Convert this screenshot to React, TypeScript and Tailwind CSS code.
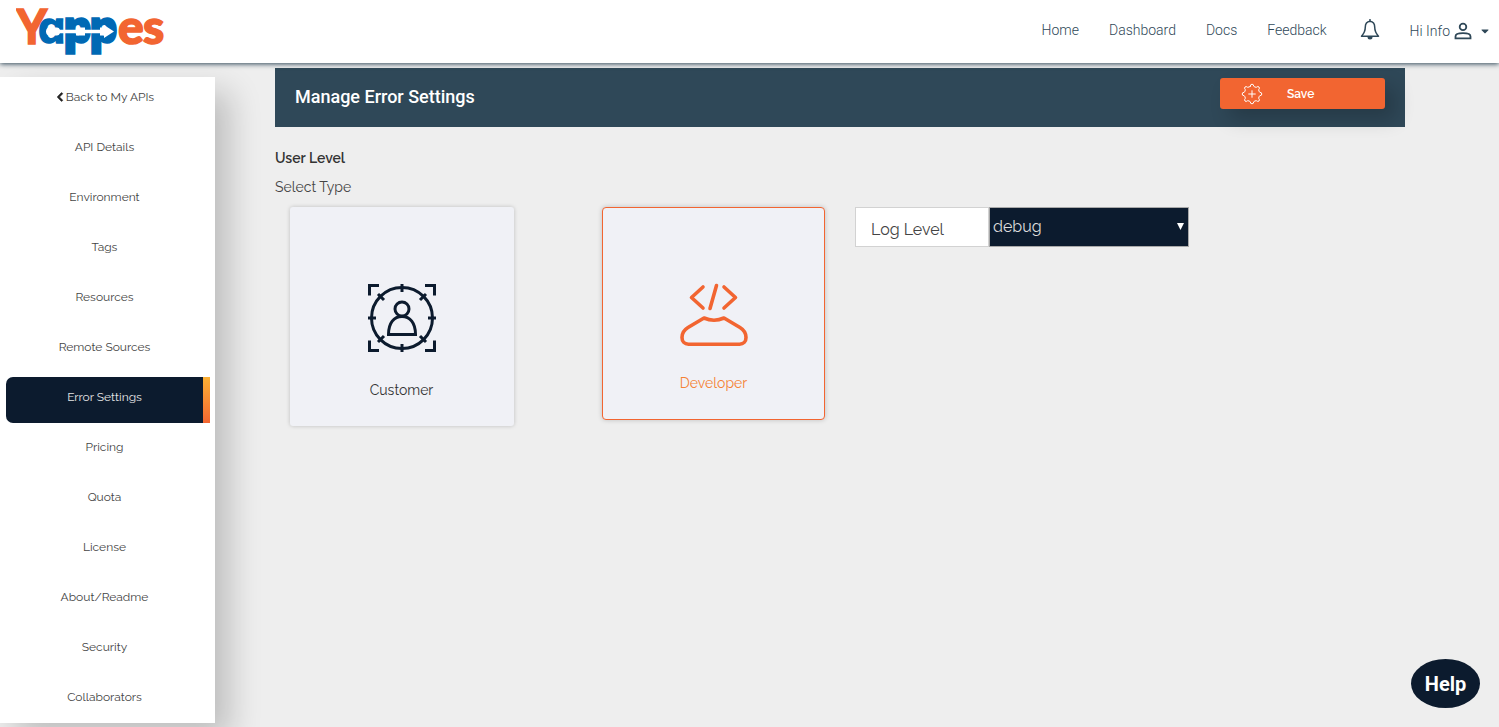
import { FaChevronLeft, FaCaretDown } from "react-icons/fa";

const navLinks = ["Home", "Dashboard", "Docs", "Feedback"];

const sideLinks = [
  "API Details",
  "Environment",
  "Tags",
  "Resources",
  "Remote Sources",
  "Error Settings",
  "Pricing",
  "Quota",
  "License",
  "About/Readme",
  "Security",
  "Collaborators",
];

function Logo() {
  return (
    <svg width="160" height="63" viewBox="0 0 160 63" role="img" aria-label="Yappes">
      <g fontFamily="Lato, sans-serif" fontWeight="900" fontSize="48" fill="#f26531" stroke="#f26531" strokeWidth="1.500">
        <text x="0" y="44" fontFamily="Raleway, Lato, sans-serif" fontWeight="700">Y</text>
        <text x="102" y="44">e</text>
        <text x="127" y="44">s</text>
      </g>
      <g fontFamily="Open Sans, sans-serif" fontWeight="800" fontSize="45" fill="#0069b4" stroke="#0069b4" strokeWidth="1.500">
        <text x="22" y="43">ɑ</text>
        <text x="47" y="43">p</text>
        <text x="73" y="43">p</text>
      </g>
      <path
        d="M30 31.500a4 4 0 0 1 4-4h7q2 0 3 2.300h16v-2.300h9v2.300h15v-2.300h4v-2.500l10 6.500-10 6.500v-2.500h-4v-2.300H69v2.300h-9v-2.300H44q-1 2.300-3 2.300h-7a4 4 0 0 1-4-4z"
        fill="#fff"
      />
    </svg>
  );
}

function BellIcon() {
  return (
    <svg width="20" height="22" viewBox="0 0 20 22" fill="none" stroke="#2f4858" strokeWidth="1.5" strokeLinejoin="round">
      <path d="M10 2.3c-3.2.4-4.7 2.700-4.700 5.700 0 4.500-1.300 6.500-3.800 9.200h17c-2.500-2.700-3.800-4.700-3.800-9.200 0-3-1.500-5.300-4.700-5.700z" />
      <path d="M10 .6v1.700" strokeLinecap="round" />
      <path d="M7.500 18h5a2.500 2.500 0 0 1-5 0z" fill="#2f4858" stroke="none" />
    </svg>
  );
}

function UserIcon() {
  return (
    <svg width="18" height="18" viewBox="0 0 18 18" fill="none" stroke="#2f4858" strokeWidth="1.800">
      <circle cx="9" cy="4.900" r="3.300" />
      <path d="M1.500 16.300v-1.800c0-2.300 4.200-3.300 7.500-3.300s7.500 1 7.500 3.300v1.800z" />
    </svg>
  );
}

function GearPlusIcon() {
  return (
    <svg width="22" height="22" viewBox="0 0 22 22" fill="none" stroke="#fff" strokeWidth="1" strokeLinejoin="round" strokeLinecap="round">
      <path d="M9.300 3.200 Q9.300 1.200 11 1.200 T12.700 3.200 Q13.800 4.300 15.300 4.300 Q17 2.900 18 4 T17.700 6.700 Q17.700 8.300 18.800 9.300 Q20.800 9.300 20.800 11 T18.800 12.700 Q17.700 13.700 17.700 15.300 Q19.100 17 18 18 T15.300 17.700 Q13.800 17.700 12.700 18.800 Q12.700 20.800 11 20.800 T9.300 18.800 Q8.200 17.700 6.700 17.700 Q5 19.100 4 18 T4.300 15.300 Q4.300 13.700 3.200 12.700 Q1.200 12.700 1.200 11 T3.200 9.300 Q4.300 8.300 4.300 6.700 Q2.900 5 4 4 T6.700 4.300 Q8.200 4.300 9.300 3.200z" />
      <path d="M11 7.700v6.600M7.700 11h6.600" />
    </svg>
  );
}

function CustomerIcon() {
  return (
    <svg width="68" height="68" viewBox="0 0 68 68" fill="none" stroke="#0c1b2e" strokeWidth="3">
      <path d="M1.500 11.500v-10h9.500M57 1.500h9.500v10M66.500 56.500v10H57M11 66.500H1.500v-10" />
      <circle cx="34" cy="34" r="30.500" />
      <path d="M34 0v8M34 60v8M0 34h8M60 34h8M10 10l6 6M58 10l-6 6M10 58l6-6M58 58l-6-6" />
      <circle cx="34" cy="25" r="7" />
      <path d="M20.500 50.500C20.500 39 26 32.500 34 32.500S47.500 39 47.500 50.500z" />
    </svg>
  );
}

function DeveloperIcon() {
  return (
    <svg width="68" height="64" viewBox="0 0 68 64" fill="none" stroke="#f26531" strokeWidth="3.600" strokeLinecap="round" strokeLinejoin="round">
      <path d="M23 4L11.500 14.500 23 25M44 4l11.500 10.500L44 25M36.500 2.500l-6.500 23" />
      <path d="M24 35c6 2.700 14 2.700 20 0l16 9.500c4 2.400 6 5 6 10 0 4-2.500 6.700-6.500 6.700h-51C4.500 61.200 2 58.500 2 54.500c0-5 2-7.600 6-10z" />
    </svg>
  );
}

export default function App() {
  return (
    <div className="flex min-h-screen flex-col bg-[#eeeeee] font-[Raleway,Lato,sans-serif] text-[#444]">
      <header className="relative z-10 flex h-[63px] items-center justify-between bg-white pl-4 pr-2 shadow-[0_1px_5px_0_#2f4858]">
        <a href="#home">
          <Logo />
        </a>
        <nav className="flex items-center gap-[30px] pb-1 font-[Roboto,sans-serif] text-[14px] font-light leading-5 text-[#2f4858]">
          {navLinks.map((label) => (
            <a key={label} href={`#${label.toLowerCase()}`}>
              {label}
            </a>
          ))}
          <button type="button" aria-label="Notifications" className="ml-[3px]">
            <BellIcon />
          </button>
          <button type="button" className="flex items-center pt-[2px]">
            <span>Hi Info</span>
            <span className="ml-1">
              <UserIcon />
            </span>
            <FaCaretDown className="ml-[7px] size-3" />
          </button>
        </nav>
      </header>

      <div className="flex flex-1 items-start">
        <aside className="mt-[14px] w-[215px] shrink-0 bg-white shadow-[15px_15px_30px_rgba(0,0,0,0.2)]">
          <nav className="flex flex-col gap-1 pl-[6px] pr-[5px] text-center text-[12px] leading-5">
            <a href="#my-apis" className="flex h-[46px] items-start justify-center gap-px pr-[7px] pt-[10px]">
              <FaChevronLeft className="mt-[5px] size-[10px] stroke-[#222] stroke-[40px] text-[#222]" />
              Back to My APIs
            </a>
            {sideLinks.map((label) =>
              label === "Error Settings" ? (
                <a
                  key={label}
                  href="#error-settings"
                  aria-current="page"
                  className="flex h-[46px] overflow-hidden rounded-l-[7px] bg-[#0c1b2e] text-[#e6e6e6]"
                >
                  <span className="flex-1 pt-[10px]">{label}</span>
                  <span className="w-[7px] bg-linear-to-b from-[#fbb034] to-[#f26531]" />
                </a>
              ) : (
                <a key={label} href="#section" className="h-[46px] pr-[7px] pt-[10px]">
                  {label}
                </a>
              ),
            )}
          </nav>
        </aside>

        <main className="ml-[60px] mr-[94px] mt-[5px] flex-1">
          <div className="flex h-[59px] items-start justify-between bg-[#2f4858] pl-5 pr-5 pt-[10px]">
            <h1 className="pt-[7px] font-[Roboto,sans-serif] text-[18px] font-medium leading-6 text-white">
              Manage Error Settings
            </h1>
            <button
              type="button"
              className="flex h-[31px] w-[165px] items-center rounded-[3px] bg-[#f26531] pl-[21px] text-[12px] font-semibold text-white shadow-[10px_10px_20px_rgba(0,0,0,0.2)]"
            >
              <GearPlusIcon />
              <span className="ml-6">Save</span>
            </button>
          </div>

          <h2 className="mt-[21px] text-[14px] font-semibold leading-5 text-[#333]">User Level</h2>
          <p className="mt-[9px] text-[14px] leading-5">Select Type</p>

          <div className="mt-[10px] flex items-start">
            <button
              type="button"
              className="ml-[15px] flex h-[219px] w-[224px] flex-col items-center rounded-[3px] bg-[#f0f1f6] pr-px pt-[77px] text-[14px] leading-5 text-[#333] shadow-[0_0_4px_rgba(0,0,0,0.2)]"
            >
              <CustomerIcon />
              <span className="mt-[28px]">Customer</span>
            </button>
            <button
              type="button"
              className="ml-[88px] flex h-[213px] w-[223px] flex-col items-center rounded-[4px] border border-[#f26531] bg-[#f0f1f6] pt-[75px] text-[14px] leading-5 text-[#f58233] shadow-[0_0_5px_rgba(0,0,0,0.2)]"
            >
              <DeveloperIcon />
              <span className="mt-[26px]">Developer</span>
            </button>
            <div className="ml-[30px] flex h-10 text-[16px]">
              <label
                htmlFor="log-level"
                className="w-[134px] border border-[#d2d2d2] bg-white pl-[15px] pt-[10px] leading-6"
              >
                Log Level
              </label>
              <div className="relative">
                <select
                  id="log-level"
                  defaultValue="debug"
                  className="h-10 w-[200px] appearance-none border border-[#a9a9a9] bg-[#0c1b2e] pl-[3px] text-[16px] leading-6 text-[#ddd]"
                >
                  <option>debug</option>
                  <option>info</option>
                  <option>error</option>
                </select>
                <svg width="7" height="7" viewBox="0 0 7 7" className="pointer-events-none absolute right-[5px] top-4">
                  <path d="M0 0h7L3.500 7z" fill="#fff" />
                </svg>
              </div>
            </div>
          </div>
        </main>
      </div>

      <button
        type="button"
        className="fixed bottom-[19px] right-[19px] h-[49px] w-[69px] rounded-[50%] bg-[#0c1b2e] font-[Roboto,sans-serif] text-[20px] font-bold text-white"
      >
        Help
      </button>
    </div>
  );
}
